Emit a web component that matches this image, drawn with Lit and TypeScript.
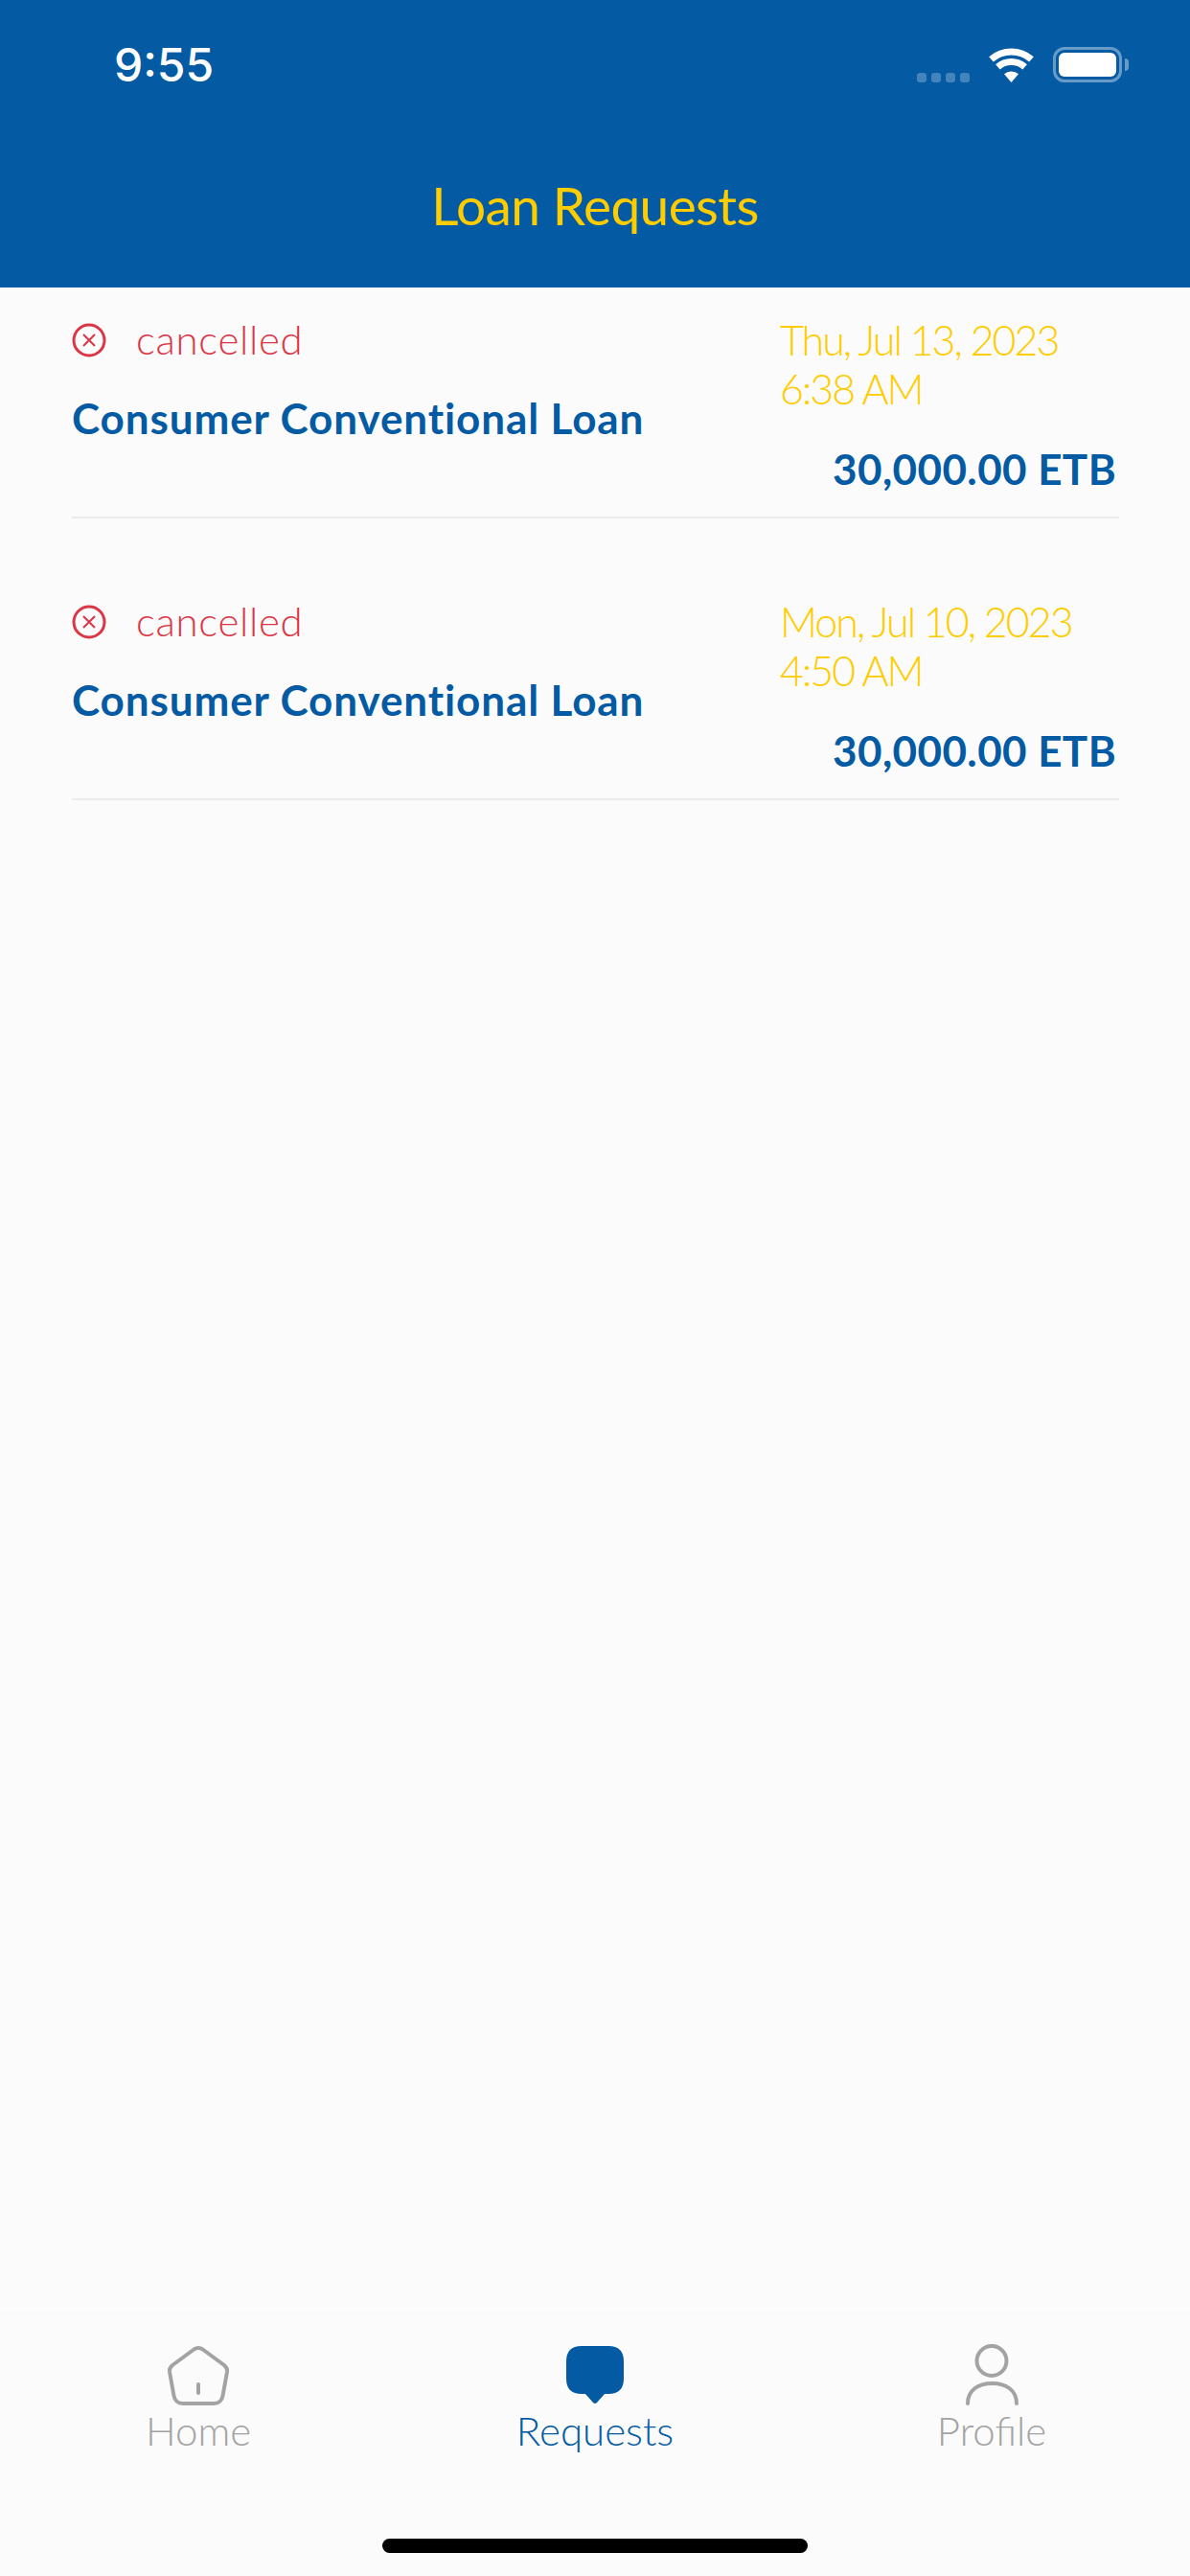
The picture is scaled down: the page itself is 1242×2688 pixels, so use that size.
import { LitElement, html, css, svg } from "lit";
import { customElement } from "lit/decorators.js";

interface LoanRequest {
  status: string;
  name: string;
  date: string;
  time: string;
  amount: string;
}

const requests: LoanRequest[] = [
  {
    status: "cancelled",
    name: "Consumer Conventional Loan",
    date: "Thu, Jul 13, 2023",
    time: "6:38 AM",
    amount: "30,000.00 ETB",
  },
  {
    status: "cancelled",
    name: "Consumer Conventional Loan",
    date: "Mon, Jul 10, 2023",
    time: "4:50 AM",
    amount: "30,000.00 ETB",
  },
];

const homeIcon = svg`<path d="M31.5 7.5 Q36 4.5 40.5 7.5 L63 24 Q66.5 27 66 31 L61.5 56 Q60 64 52 64 L20 64 Q12 64 10.5 56 L6 31 Q5.5 27 9 24 Z" fill="none" stroke="currentColor" stroke-width="4" stroke-linejoin="round"/>
  <path d="M36 44 V53" fill="none" stroke="currentColor" stroke-width="4" stroke-linecap="round"/>`;

const bubbleIcon = svg`<path d="M22 4 H50 Q66 4 66 20 V38 Q66 54 50 54 H46 L38 63 Q36 65 34 63 L26 54 H22 Q6 54 6 38 V20 Q6 4 22 4 Z" fill="currentColor"/>`;

const profileIcon = svg`<circle cx="36" cy="19.5" r="15.5" fill="none" stroke="currentColor" stroke-width="4"/>
  <path d="M11 64 C11 50 22 43 36.5 43 C51 43 62 50 62 64" fill="none" stroke="currentColor" stroke-width="4" stroke-linecap="round"/>`;

@customElement("app-root")
export class AppRoot extends LitElement {
  static styles = css`
    :host {
      display: block;
      font-family: "Lato", "Liberation Sans", sans-serif;
    }

    .screen {
      height: 2688px;
      display: flex;
      flex-direction: column;
      background: #fbfbfb;
    }

    .header {
      height: 300px;
      box-sizing: border-box;
      background: #045ba3;
      display: flex;
      flex-direction: column;
    }

    .status-bar {
      display: flex;
      justify-content: space-between;
      align-items: flex-end;
      padding: 49px 64px 0 119px;
      height: 37px;
    }

    .clock {
      font-family: "Inter", sans-serif;
      font-size: 48px;
      font-weight: 500;
      line-height: 37px;
      padding-top: 2px;
      color: #fff;
    }

    .status-icons {
      display: flex;
      align-items: flex-end;
    }

    .dots {
      display: flex;
      gap: 5px;
      margin-right: 20px;
    }

    .dots span {
      width: 10px;
      height: 10px;
      border-radius: 3px;
      background: rgba(255, 255, 255, 0.25);
    }

    .wifi {
      display: block;
      margin-right: 20px;
    }

    .battery {
      width: 72px;
      height: 37px;
      box-sizing: border-box;
      border: 3px solid rgba(255, 255, 255, 0.4);
      border-radius: 12px;
      padding: 3px;
    }

    .battery div {
      height: 100%;
      background: #fff;
      border-radius: 6px;
    }

    .nub {
      width: 4px;
      height: 13px;
      margin: 0 0 12px 3px;
      background: rgba(255, 255, 255, 0.4);
      border-radius: 0 4px 4px 0;
    }

    .title {
      margin-top: 96px;
      text-align: center;
      font-size: 55px;
      font-weight: 400;
      letter-spacing: -0.6px;
      line-height: 64px;
      color: #ffcc00;
    }

    .list {
      flex: 1;
      display: flex;
      flex-direction: column;
      gap: 53px;
      padding: 0 74px 0 75px;
    }

    .row {
      display: flex;
      justify-content: space-between;
      padding: 29px 0 24px;
      border-bottom: 2px solid #ececec;
    }

    .status {
      display: flex;
      align-items: center;
      gap: 31px;
      height: 51px;
      font-size: 42px;
      font-weight: 300;
      letter-spacing: 0.7px;
      color: #dc3545;
    }

    .status span {
      position: relative;
      top: -1px;
    }

    .status svg {
      display: block;
      flex-shrink: 0;
    }

    .name {
      margin-top: 30px;
      font-size: 44px;
      font-weight: 700;
      letter-spacing: 0.9px;
      line-height: 52px;
      color: #045ba3;
    }

    .side {
      width: 354px;
      display: flex;
      flex-direction: column;
    }

    .when {
      font-size: 43px;
      font-weight: 300;
      letter-spacing: -2px;
      line-height: 51px;
      color: #ffcc00;
    }

    .amount {
      margin: 33px 3px 0 0;
      text-align: right;
      font-size: 44px;
      font-weight: 700;
      letter-spacing: 0.4px;
      line-height: 51px;
      color: #045ba3;
    }

    .tabbar {
      height: 276px;
      box-sizing: border-box;
      border-top: 6px solid #fafafa;
      display: flex;
      flex-direction: column;
    }

    .tabs {
      display: grid;
      grid-template-columns: repeat(3, 1fr);
      padding-top: 26px;
    }

    .tab {
      display: flex;
      flex-direction: column;
      align-items: center;
      font-size: 42px;
      font-weight: 300;
      line-height: 40px;
      color: #a3a3a3;
    }

    .tab.active {
      color: #045ba3;
    }

    .tab svg {
      display: block;
    }

    .home-indicator {
      width: 444px;
      height: 15px;
      margin: 93px auto 0;
      border-radius: 8px;
      background: #000;
    }
  `;

  private renderRow(item: LoanRequest) {
    return html`
      <div class="row">
        <div>
          <div class="status">
            <svg width="36" height="36" viewBox="0 0 36 36">
              <circle cx="18" cy="18" r="16" fill="none" stroke="currentColor" stroke-width="3" />
              <path d="M12 12 L24 24 M24 12 L12 24" fill="none" stroke="currentColor" stroke-width="2" />
            </svg>
            <span>${item.status}</span>
          </div>
          <div class="name">${item.name}</div>
        </div>
        <div class="side">
          <div class="when">${item.date}<br />${item.time}</div>
          <div class="amount">${item.amount}</div>
        </div>
      </div>
    `;
  }

  private renderTab(label: string, icon: unknown, active = false) {
    return html`
      <div class="tab ${active ? "active" : ""}">
        <svg width="72" height="72" viewBox="0 0 72 72">${icon}</svg>
        ${label}
      </div>
    `;
  }

  render() {
    return html`
      <div class="screen">
        <div class="header">
          <div class="status-bar">
            <div class="clock">9:55</div>
            <div class="status-icons">
              <div class="dots"><span></span><span></span><span></span><span></span></div>
              <svg class="wifi" width="47" height="36" viewBox="0 0 47 36">
                <path d="M2.5 11.8 A32 32 0 0 1 44.5 11.8" fill="none" stroke="#fff" stroke-width="7" />
                <path d="M9.4 19.8 A21.5 21.5 0 0 1 37.6 19.8" fill="none" stroke="#fff" stroke-width="7" />
                <path d="M23.5 36 L16 27.3 A11.5 11.5 0 0 1 31 27.3 Z" fill="#fff" />
              </svg>
              <div class="battery"><div></div></div>
              <div class="nub"></div>
            </div>
          </div>
          <div class="title">Loan Requests</div>
        </div>
        <div class="list">${requests.map((r) => this.renderRow(r))}</div>
        <div class="tabbar">
          <div class="tabs">
            ${this.renderTab("Home", homeIcon)}
            ${this.renderTab("Requests", bubbleIcon, true)}
            ${this.renderTab("Profile", profileIcon)}
          </div>
          <div class="home-indicator"></div>
        </div>
      </div>
    `;
  }
}

declare global {
  interface HTMLElementTagNameMap {
    "app-root": AppRoot;
  }
}
